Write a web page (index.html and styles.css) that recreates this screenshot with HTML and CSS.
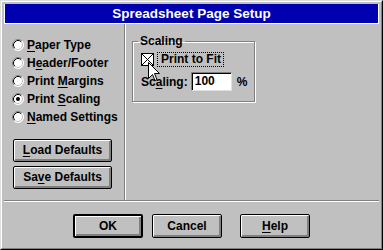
FILE: index.html
```html
<!DOCTYPE html>
<html>
<head>
<meta charset="utf-8">
<link rel="stylesheet" href="styles.css">
</head>
<body>
<div class="window">
  <div class="frame">
    <div class="titlebar">Spreadsheet Page Setup</div>
    <div class="main">
      <div class="left">
        <div class="radios">
          <div class="radio"><svg class="rb" width="12" height="12" viewBox="0 0 12 12"><circle cx="6" cy="6" r="5.5" fill="#fff"/><path d="M9.89 2.11A5.5 5.5 0 0 0 2.11 9.89" stroke="#808080" fill="none"/><path d="M2.11 9.89A5.5 5.5 0 0 0 9.89 2.11" stroke="#fff" fill="none"/><path d="M9.18 2.82A4.5 4.5 0 0 0 2.82 9.18" stroke="#000" fill="none"/><path d="M2.82 9.18A4.5 4.5 0 0 0 9.18 2.82" stroke="#c0c0c0" fill="none"/></svg><span><u>P</u>aper Type</span></div>
          <div class="radio"><svg class="rb" width="12" height="12" viewBox="0 0 12 12"><circle cx="6" cy="6" r="5.5" fill="#fff"/><path d="M9.89 2.11A5.5 5.5 0 0 0 2.11 9.89" stroke="#808080" fill="none"/><path d="M2.11 9.89A5.5 5.5 0 0 0 9.89 2.11" stroke="#fff" fill="none"/><path d="M9.18 2.82A4.5 4.5 0 0 0 2.82 9.18" stroke="#000" fill="none"/><path d="M2.82 9.18A4.5 4.5 0 0 0 9.18 2.82" stroke="#c0c0c0" fill="none"/></svg><span>H<u>e</u>ader/Footer</span></div>
          <div class="radio"><svg class="rb" width="12" height="12" viewBox="0 0 12 12"><circle cx="6" cy="6" r="5.5" fill="#fff"/><path d="M9.89 2.11A5.5 5.5 0 0 0 2.11 9.89" stroke="#808080" fill="none"/><path d="M2.11 9.89A5.5 5.5 0 0 0 9.89 2.11" stroke="#fff" fill="none"/><path d="M9.18 2.82A4.5 4.5 0 0 0 2.82 9.18" stroke="#000" fill="none"/><path d="M2.82 9.18A4.5 4.5 0 0 0 9.18 2.82" stroke="#c0c0c0" fill="none"/></svg><span>Print <u>M</u>argins</span></div>
          <div class="radio"><svg class="rb" width="12" height="12" viewBox="0 0 12 12"><circle cx="6" cy="6" r="5.5" fill="#fff"/><path d="M9.89 2.11A5.5 5.5 0 0 0 2.11 9.89" stroke="#808080" fill="none"/><path d="M2.11 9.89A5.5 5.5 0 0 0 9.89 2.11" stroke="#fff" fill="none"/><path d="M9.18 2.82A4.5 4.5 0 0 0 2.82 9.18" stroke="#000" fill="none"/><path d="M2.82 9.18A4.5 4.5 0 0 0 9.18 2.82" stroke="#c0c0c0" fill="none"/><circle cx="6" cy="6" r="2" fill="#000"/></svg><span>Print <u>S</u>caling</span></div>
          <div class="radio"><svg class="rb" width="12" height="12" viewBox="0 0 12 12"><circle cx="6" cy="6" r="5.5" fill="#fff"/><path d="M9.89 2.11A5.5 5.5 0 0 0 2.11 9.89" stroke="#808080" fill="none"/><path d="M2.11 9.89A5.5 5.5 0 0 0 9.89 2.11" stroke="#fff" fill="none"/><path d="M9.18 2.82A4.5 4.5 0 0 0 2.82 9.18" stroke="#000" fill="none"/><path d="M2.82 9.18A4.5 4.5 0 0 0 9.18 2.82" stroke="#c0c0c0" fill="none"/></svg><span><u>N</u>amed Settings</span></div>
        </div>
        <div class="side-buttons">
          <div class="btn side"><u>L</u>oad Defaults</div>
          <div class="btn side">Sa<u>v</u>e Defaults</div>
        </div>
      </div>
      <div class="right">
        <fieldset class="group">
          <legend class="legend">Scaling</legend>
          <div class="check-row">
            <svg class="cb" width="13" height="13" viewBox="0 0 13 13"><rect x="0.5" y="0.5" width="12" height="12" fill="#fff" stroke="#000"/><path d="M1 1L12 12M12 1L1 12" stroke="#000"/></svg>
            <span class="focus">Print to Fit</span>
          </div>
          <div class="scale-row">
            <span class="lbl">Sc<u>a</u>ling:</span>
            <div class="edit">100</div>
            <span class="pct">%</span>
          </div>
          <svg class="cursor" width="12" height="20" viewBox="0 0 12 20"><path d="M0.5 0.5V16.5L4.5 12.5L7 18.5L9 17.5L6.5 11.5H11.5Z" fill="#fff" stroke="#000"/></svg>
        </fieldset>
      </div>
    </div>
    <div class="bottom">
      <div class="btn dlg default">OK</div>
      <div class="btn dlg cancel">Cancel</div>
      <div class="btn dlg help"><u>H</u>elp</div>
    </div>
  </div>
</div>
</body>
</html>
```
FILE: styles.css
```css
* { box-sizing: border-box; }
html, body { margin: 0; padding: 0; }
body {
  width: 383px;
  height: 250px;
  background: #c0c0c0;
  font-family: "Liberation Sans", Arial, sans-serif;
  font-weight: bold;
  font-size: 12px;
  color: #000;
  overflow: hidden;
}
u {
  text-decoration-thickness: 1px;
  text-underline-offset: 2px;
}
.window {
  width: 383px;
  height: 250px;
  border: 1px solid;
  border-color: #dfdfdf #000 #000 #dfdfdf;
}
.frame {
  height: 100%;
  border: 1px solid;
  border-color: #fff #808080 #808080 #fff;
  padding: 2px;
  display: flex;
  flex-direction: column;
}
.titlebar {
  height: 20px;
  flex: none;
  background: #0000b0;
  border: 1px solid #fff;
  border-top: none;
  color: #fff;
  font-size: 13.5px;
  line-height: 19px;
  text-align: center;
}
.main {
  height: 177px;
  flex: none;
  display: flex;
  border-bottom: 1px solid #808080;
}
.left {
  width: 121px;
  border-right: 1px solid #808080;
  padding-top: 12px;
}
.radios {
  display: flex;
  flex-direction: column;
}
.radio {
  height: 18px;
  display: flex;
  align-items: center;
  padding-left: 8px;
  gap: 3px;
}
.rb { display: block; flex: none; }
.side-buttons {
  margin-top: 13px;
  padding-left: 9px;
  display: flex;
  flex-direction: column;
  gap: 4px;
}
.btn {
  border: 1px solid #000;
  border-radius: 2px;
  box-shadow: inset 1px 1px 0 #fff, inset -1px -1px 0 #808080, inset -2px -2px 0 #808080;
  display: flex;
  align-items: center;
  justify-content: center;
  padding-bottom: 1px;
}
.btn.side {
  width: 99px;
  height: 23px;
}
.right {
  flex: 1;
  border-left: 1px solid #fff;
  padding: 10px 0 0 6px;
}
.group {
  position: relative;
  margin: 0;
  width: 123px;
  min-width: 0;
  height: 68px;
  padding: 0 0 0 8px;
  border: 1px solid #808080;
  box-shadow: 1px 1px 0 #fff, inset 1px 1px 0 #fff;
}
.legend {
  padding: 0 2px;
  margin-left: -3px;
  line-height: 14px;
}
.check-row {
  margin-top: 4px;
  height: 15px;
  display: flex;
  align-items: center;
}
.cb { display: block; flex: none; }
.focus {
  margin-left: 3px;
  padding: 0 2px 0 3px;
  border: 1px dotted #000;
  line-height: 13px;
}
.scale-row {
  margin-top: 5px;
  display: flex;
  align-items: center;
}
.edit {
  margin-left: 3px;
  width: 41px;
  height: 19px;
  background: #fff;
  border: 1px solid;
  border-color: #808080 #dfdfdf #dfdfdf #808080;
  box-shadow: inset 1px 1px 0 #000;
  padding: 1px 0 0 3px;
  line-height: 15px;
}
.pct {
  margin-left: 5px;
}
.cursor {
  position: absolute;
  left: 15px;
  top: 14px;
}
.bottom {
  flex: 1;
  border-top: 1px solid #fff;
  display: flex;
  align-items: flex-start;
  padding: 12px 0 0 69px;
}
.btn.dlg {
  width: 70px;
  height: 24px;
}
.btn.default {
  border-width: 2px;
}
.btn.cancel { margin-left: 9px; }
.btn.help { margin-left: 18px; }
```
